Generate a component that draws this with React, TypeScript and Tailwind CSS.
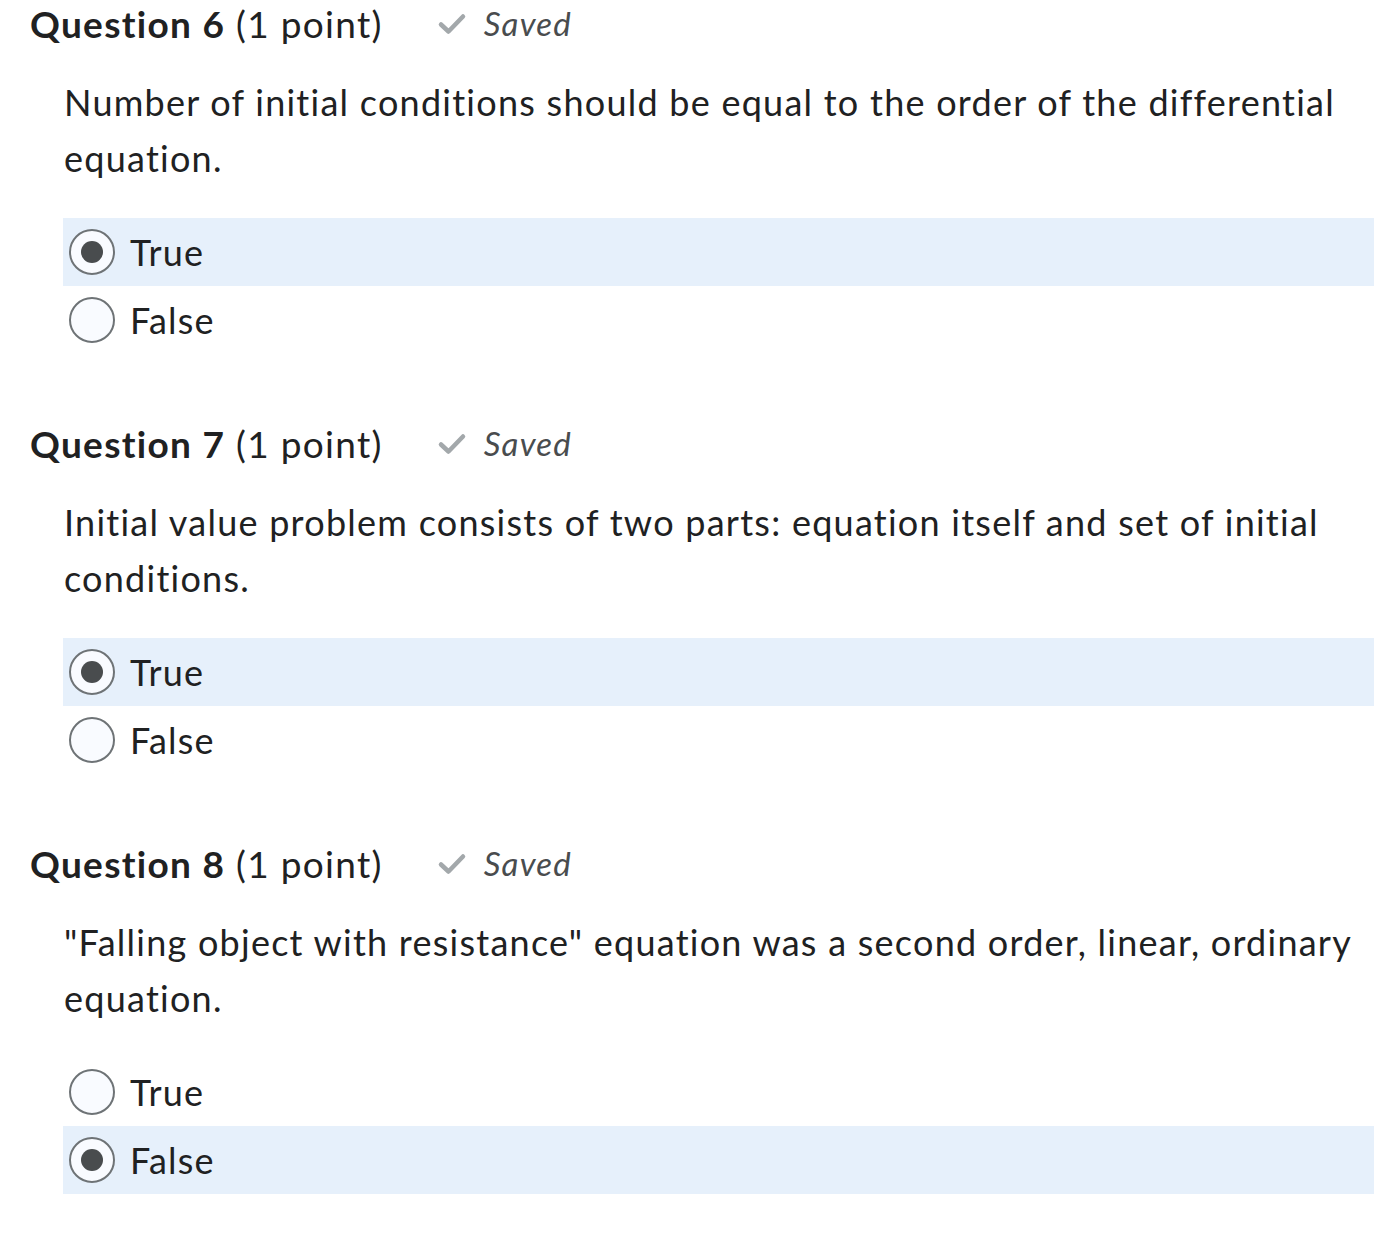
import React from "react";

type Question = {
  num: number;
  text: string;
  selected: "True" | "False";
};

const QUESTIONS: Question[] = [
  {
    num: 6,
    text: "Number of initial conditions should be equal to the order of the differential equation.",
    selected: "True",
  },
  {
    num: 7,
    text: "Initial value problem consists of two parts: equation itself and set of initial conditions.",
    selected: "True",
  },
  {
    num: 8,
    text: "\"Falling object with resistance\" equation was a second order, linear, ordinary equation.",
    selected: "False",
  },
];

function Radio({ checked }: { checked: boolean }) {
  return (
    <span className="flex h-[46px] w-[46px] shrink-0 items-center justify-center rounded-full border-2 border-[#6e7376] bg-[#f9fbff]">
      {checked && <span className="h-[22px] w-[22px] rounded-full bg-[#494c4e]" />}
    </span>
  );
}

function Option({ label, checked }: { label: string; checked: boolean }) {
  return (
    <div className={"flex h-[68px] items-center gap-[15px] pl-[6px] " + (checked ? "bg-[#e6f0fb]" : "")}>
      <Radio checked={checked} />
      <span className="text-[36px] tracking-[1.2px] text-[#202122]">{label}</span>
    </div>
  );
}

function QuestionBlock({ q }: { q: Question }) {
  return (
    <section className="pb-[60px]">
      <div className="flex h-[60px] items-center">
        <h2 className="text-[37px] tracking-[1.3px] text-[#202122]">
          <span className="font-bold">Question {q.num}</span> (1 point)
        </h2>
        <div className="ml-[54px] flex items-center gap-[17px] text-[#494c4e]">
          <svg width="30" height="24" viewBox="0 0 30 24" fill="none" aria-hidden>
            <path d="M4 12.5 L11.5 19.5 L26 4.5" stroke="#a3a8ab" strokeWidth="4.5" strokeLinecap="round" strokeLinejoin="round" />
          </svg>
          <span className="text-[33px] italic tracking-[1.2px]">Saved</span>
        </div>
      </div>
      <p className="mt-[20px] pl-[34px] pr-[10px] text-[36px] leading-[56px] tracking-[1.25px] text-[#202122]">
        {q.text}
      </p>
      <div className="mt-[32px] ml-[33px]">
        <Option label="True" checked={q.selected === "True"} />
        <Option label="False" checked={q.selected === "False"} />
      </div>
    </section>
  );
}

export default function App() {
  return (
    <div className="min-h-[1238px] bg-white pl-[30px] font-['Lato','Noto_Sans',sans-serif] [font-variant-ligatures:none]">
      <div className="-mt-[6px]">
        {QUESTIONS.map((q) => (
          <QuestionBlock key={q.num} q={q} />
        ))}
      </div>
    </div>
  );
}
